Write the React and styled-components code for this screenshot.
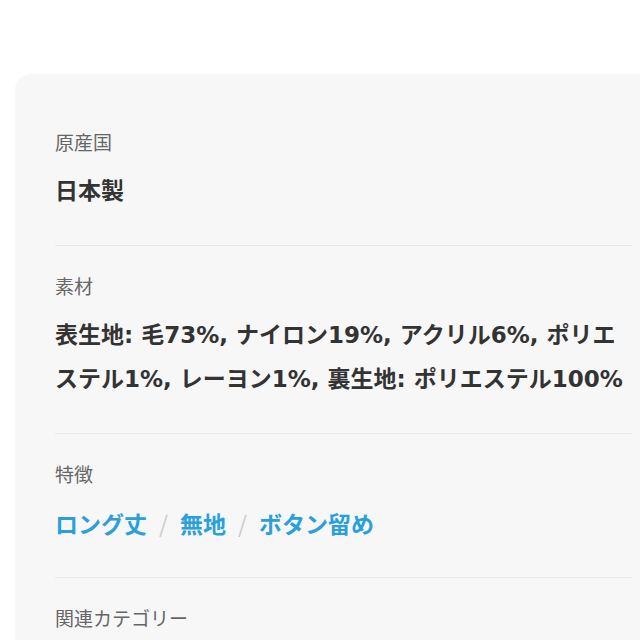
import React from 'react';
import styled, {createGlobalStyle} from 'styled-components';


const GlobalStl = createGlobalStyle`
  html, body {
    margin: 0;
    padding: 0;
    background: #ffffff;
    overflow: hidden;
  }
  body {
    font-family: "Noto Sans CJK JP", "Noto Sans", sans-serif;
    color: #333333;
  }
`


const PageStl = styled.div`
  width: 640px;
  height: 640px;
  padding: 74px 0 0 15px;
  box-sizing: border-box;
  overflow: hidden;
`


const CardStl = styled.div`
  width: 657px;
  min-height: 620px;
  box-sizing: border-box;
  padding: 28px 40px 0 40px;
  background: #f7f7f7;
  border-radius: 16px;
`


const SectionStl = styled.section`
  padding: 26px 0 32px;
  border-bottom: ${props => props.$last ? 'none' : '1px solid #e9e9e9'};
`


const LabelStl = styled.div`
  font-size: 19px;
  line-height: 27px;
  color: #666666;
  margin-bottom: 14px;
`


const ValueStl = styled.div`
  font-family: "DejaVu Sans", "Noto Sans CJK JP", sans-serif;
  font-size: 23px;
  line-height: 44px;
  font-weight: 700;
  color: #333333;
`


const TagListStl = styled.div`
  display: flex;
  align-items: center;
  gap: 12px;
  font-size: 23px;
  line-height: 44px;
  font-weight: 700;
`


const TagStl = styled.span`
  color: #2b9fd9;
`


const SlashStl = styled.span`
  color: #cccccc;
  font-weight: 400;
`


const tags = ['ロング丈', '無地', 'ボタン留め']


export default function App() {
  return (
    <>
      <GlobalStl/>
      <PageStl>
        <CardStl>
          <SectionStl>
            <LabelStl>原産国</LabelStl>
            <ValueStl>日本製</ValueStl>
          </SectionStl>

          <SectionStl>
            <LabelStl>素材</LabelStl>
            <ValueStl>
              表生地: 毛73%, ナイロン19%, アクリル6%, ポリエステル1%, レーヨン1%, 裏生地: ポリエステル100%
            </ValueStl>
          </SectionStl>

          <SectionStl>
            <LabelStl>特徴</LabelStl>
            <TagListStl>
              {tags.map((tag, i) => (
                <React.Fragment key={tag}>
                  {i > 0 && <SlashStl>/</SlashStl>}
                  <TagStl>{tag}</TagStl>
                </React.Fragment>
              ))}
            </TagListStl>
          </SectionStl>

          <SectionStl $last>
            <LabelStl>関連カテゴリー</LabelStl>
          </SectionStl>
        </CardStl>
      </PageStl>
    </>
  )
}
